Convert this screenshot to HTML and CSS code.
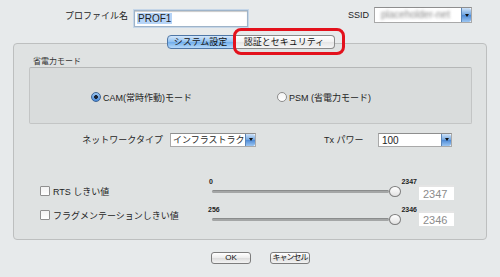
FILE: index.html
```html
<!DOCTYPE html>
<html lang="ja">

<head>
  <meta charset="UTF-8" />
  <meta name="viewport" content="width=device-width, initial-scale=1.0" />
  <title>プロファイル</title>
  <link rel="stylesheet" href="styles.css">
</head>

<body>
  <div class="top-row">
    <label class="profile-label" for="profileName">プロファイル名</label>
    <div class="text-input profile-input" id="profileName"><span class="selected-text">PROF1</span></div>
    <label class="ssid-label">SSID</label>
    <div class="popup ssid-popup">
      <span class="popup-value blurred">placeholder-net</span>
      <span class="popup-arrow"></span>
    </div>
  </div>

  <div class="panel">
    <div class="tabs" role="tablist">
      <button class="tab tab-active" role="tab" aria-selected="true">システム設定</button>
      <button class="tab tab-marked" role="tab" aria-selected="false">認証とセキュリティ</button>
    </div>

    <div class="group-title">省電力モード</div>
    <div class="group">
      <div class="radio-option radio-first">
        <span class="radio radio-on"></span>
        <span>CAM(常時作動)モード</span>
      </div>
      <div class="radio-option">
        <span class="radio"></span>
        <span>PSM (省電力モード)</span>
      </div>
    </div>

    <div class="net-row">
      <span class="net-label">ネットワークタイプ</span>
      <div class="popup net-popup">
        <span class="popup-value net-value">インフラストラク</span>
        <span class="popup-arrow"></span>
      </div>
      <span class="tx-label">Tx パワー</span>
      <div class="popup tx-popup">
        <span class="popup-value">100</span>
        <span class="popup-arrow"></span>
      </div>
    </div>

    <div class="slider-row rts-row">
      <div class="check-wrap">
        <span class="checkbox"></span>
        <span class="check-label">RTS しきい値</span>
      </div>
      <div class="slider">
        <div class="slider-labels"><span class="min-label">0</span><span>2347</span></div>
        <div class="slider-track-row"><span class="track"></span><span class="knob"></span></div>
      </div>
      <div class="value-field">2347</div>
    </div>

    <div class="slider-row frag-row">
      <div class="check-wrap">
        <span class="checkbox"></span>
        <span class="check-label">フラグメンテーションしきい値</span>
      </div>
      <div class="slider">
        <div class="slider-labels"><span>256</span><span>2346</span></div>
        <div class="slider-track-row"><span class="track"></span><span class="knob"></span></div>
      </div>
      <div class="value-field">2346</div>
    </div>
  </div>

  <div class="buttons">
    <button class="push-button" type="button">OK</button>
    <button class="push-button cancel" type="button">キャンセル</button>
  </div>
</body>

</html>
```

FILE: styles.css
```css
* {
  box-sizing: border-box;
}

body {
  margin: 0;
  width: 500px;
  height: 277px;
  overflow: hidden;
  background: #e7eaeb;
  font-family: "Liberation Sans", "Noto Sans CJK JP", sans-serif;
  font-size: 9px;
  color: #1e1e1e;
}

/* top row */
.top-row {
  display: flex;
  align-items: flex-start;
  height: 43px;
  padding-top: 7px;
}

.profile-label {
  width: 128px;
  margin-top: 3px;
  line-height: 12px;
  text-align: right;
}

.text-input {
  background: #fff;
  border: 1px solid #9fb4c9;
  box-shadow: 0 0 0 1px #c5d6e8, inset 0 1px 1px #c9c9c9;
}

.profile-input {
  margin: 3px 0 0 6px;
  width: 114px;
  height: 17px;
  padding: 2px 0 0 2px;
  font-size: 10px;
  line-height: 12px;
}

.selected-text {
  background: #b6d4f7;
  padding: 0 1px;
}

.ssid-label {
  margin-left: 100px;
  line-height: 16px;
}

.popup {
  display: flex;
  align-items: stretch;
  background: #fff;
  border: 1px solid #a9a9a9;
  border-top-color: #8e8e8e;
}

.popup-value {
  flex: 1;
  overflow: hidden;
  white-space: nowrap;
  padding-left: 3px;
  font-size: 10px;
  line-height: 13px;
}

.net-value {
  font-size: 9px;
  padding-left: 2px;
}

.popup-arrow {
  width: 10px;
  border-left: 1px solid #5d87b8;
  border-radius: 0 2px 2px 0;
  background: linear-gradient(#cfe3f8, #6ea4e0 50%, #4d8ad6 51%, #9cc6f2);
  display: flex;
  align-items: center;
  justify-content: center;
}

.popup-arrow::after {
  content: "";
  border-left: 2px solid transparent;
  border-right: 2px solid transparent;
  border-top: 3px solid #111;
}

.ssid-popup {
  margin-left: 5px;
  width: 98px;
  height: 16px;
}

.blurred {
  color: #8a8a8a;
  filter: blur(1.4px);
  padding-left: 6px;
}

/* tab panel */
.panel {
  margin: 0 13px;
  height: 197px;
  border: 1px solid #bdbfbf;
  border-radius: 4px;
  background: #dfe2e2;
  padding: 0 14px 0 15px;
}

.tabs {
  display: flex;
  justify-content: center;
  margin-top: -9px;
  height: 14px;
}

.tab {
  height: 14px;
  padding: 0;
  margin: 0;
  font-family: inherit;
  font-size: 9px;
  line-height: 12px;
  color: #111;
  border: 1px solid #8a8a8a;
}

.tab-active {
  width: 68px;
  border-color: #4f77a6;
  border-radius: 4px 0 0 4px;
  background: linear-gradient(#d3e7fb, #8ec0f1 50%, #70adeb 51%, #b6dafb);
}

.tab-marked {
  position: relative;
  width: 100px;
  border-left: none;
  border-radius: 0 4px 4px 0;
  background: linear-gradient(#ffffff, #f1f1f1 50%, #e4e4e4 51%, #f6f6f6);
}

/* red annotation ring */
.tab-marked::after {
  content: "";
  position: absolute;
  left: -2px;
  right: -11px;
  top: -8px;
  bottom: -7px;
  border: 3px solid #e3111c;
  border-radius: 8px;
}

.group-title {
  margin: 8px 0 0 4px;
  font-size: 8px;
  line-height: 10px;
  color: #333;
}

.group {
  display: flex;
  align-items: center;
  height: 57px;
  padding: 3px 0 0 61px;
  border: 1px solid #c3c5c5;
  border-top-color: #b5b7b7;
  border-radius: 2px;
  background: #d9dcdc;
}

.radio-option {
  display: flex;
  align-items: center;
  gap: 2px;
}

.radio-first {
  width: 186px;
}

.radio {
  width: 10px;
  height: 10px;
  border-radius: 50%;
  border: 1px solid #8d8d8d;
  background: linear-gradient(#f4f4f4, #ffffff);
}

.radio-on {
  border-color: #3c6495;
  background: radial-gradient(circle, #1b2535 0 1.6px, transparent 2.2px), linear-gradient(#9cc7f2, #4b8ad8);
}

.net-row {
  display: flex;
  align-items: center;
  margin-top: 8px;
  height: 15px;
}

.net-label {
  width: 134px;
  text-align: right;
}

.net-popup {
  margin-left: 7px;
  width: 86px;
  height: 14px;
}

.tx-label {
  margin-left: 68px;
  width: 42px;
}

.tx-popup {
  margin-left: 12px;
  width: 74px;
  height: 14px;
}

/* slider rows */
.slider-row {
  display: flex;
  align-items: flex-start;
  height: 22px;
}

.rts-row {
  margin-top: 31px;
}

.frag-row {
  margin-top: 6px;
}

.check-wrap {
  display: flex;
  align-items: center;
  width: 179px;
  height: 10px;
  padding-left: 11px;
  margin-top: 8px;
}

.frag-row .check-wrap {
  margin-top: 4px;
}

.checkbox {
  width: 10px;
  height: 10px;
  border: 1px solid #8f8f8f;
  border-radius: 1px;
  background: linear-gradient(#f2f2f2, #ffffff);
}

.check-label {
  margin-left: 3px;
}

.slider {
  width: 209px;
}

.slider-labels {
  display: flex;
  justify-content: space-between;
  height: 8px;
  font-size: 7px;
  font-weight: bold;
  line-height: 8px;
}

.min-label {
  margin-left: 1px;
}

.slider-track-row {
  display: flex;
  align-items: center;
  height: 11px;
  padding: 0 16px 0 4px;
}

.track {
  flex: 1;
  height: 3px;
  border-radius: 2px;
  background: #a4a6a6;
  border-top: 1px solid #8a8c8c;
}

.knob {
  width: 12px;
  height: 11px;
  border-radius: 50%;
  border: 1px solid #7e7e7e;
  background: linear-gradient(#ffffff, #e2e2e2);
}

.value-field {
  margin: 7px 0 0 2px;
  width: 35px;
  height: 15px;
  padding: 1px 0 0 4px;
  background: #fff;
  border-top: 2px solid #e4e4e4;
  font-size: 11px;
  line-height: 12px;
  color: #8c8c8c;
}

.frag-row .value-field {
  margin-top: 5px;
}

/* bottom buttons */
.buttons {
  display: flex;
  gap: 19px;
  margin-top: 12px;
  padding-left: 211px;
}

.push-button {
  width: 40px;
  height: 12px;
  padding: 0;
  font-family: inherit;
  font-size: 8px;
  line-height: 10px;
  color: #111;
  border: 1px solid #7d7d7d;
  border-radius: 3px;
  background: linear-gradient(#ffffff, #ececec 50%, #dcdcdc 51%, #f3f3f3);
}

.cancel {
  letter-spacing: -1px;
  white-space: nowrap;
  overflow: hidden;
}
```
